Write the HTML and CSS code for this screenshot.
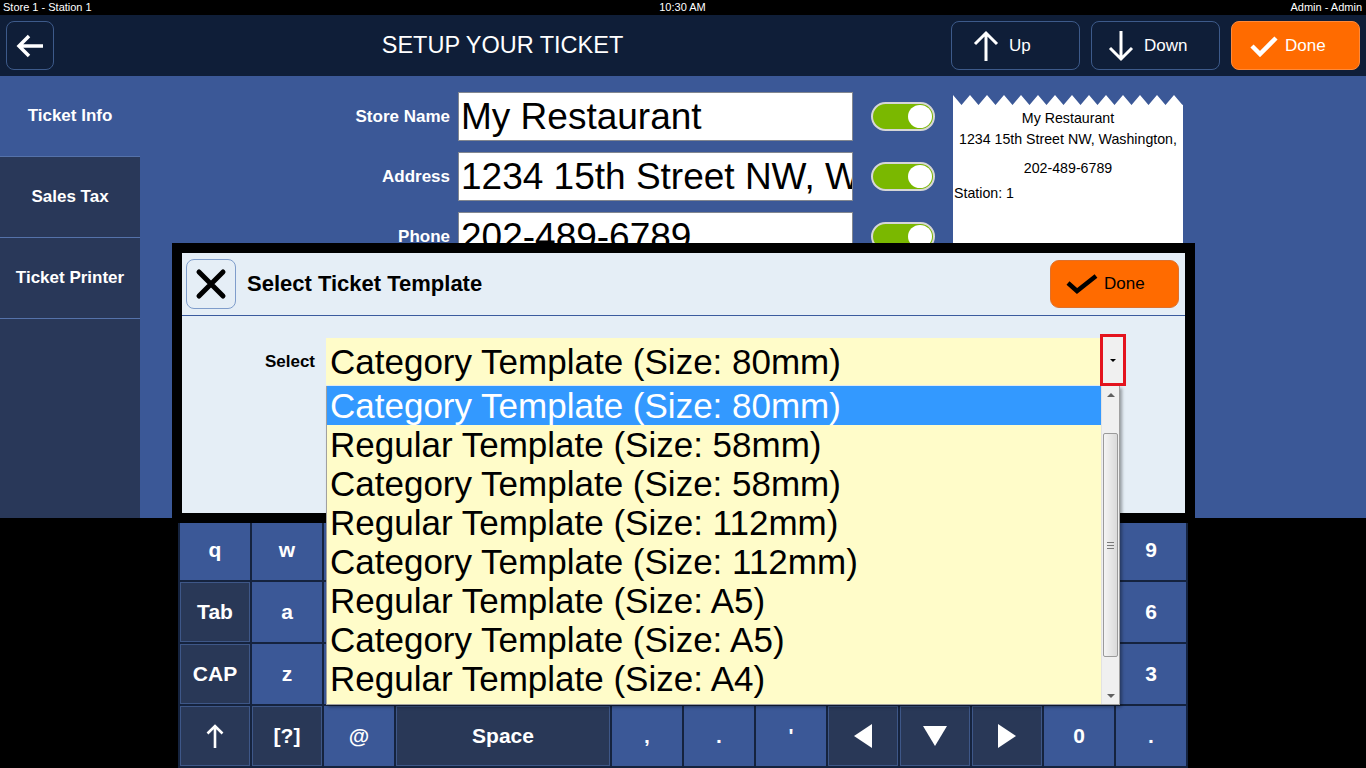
FILE: index.html
```html
<!DOCTYPE html>
<html>
<head>
<meta charset="utf-8">
<link rel="stylesheet" href="styles.css">
</head>
<body>
<div class="screen">
  <div class="statusbar">
    <span>Store 1 - Station 1</span>
    <span class="clock">10:30 AM</span>
    <span class="user">Admin - Admin</span>
  </div>

  <header class="header">
    <div class="back">
      <svg width="30" height="24" viewBox="0 0 30 24"><path d="M28 12H4M14 2L4 12l10 10" fill="none" stroke="#fff" stroke-width="3.5"/></svg>
    </div>
    <h1 class="title">SETUP YOUR TICKET</h1>
    <div class="actions">
      <div class="hbtn up">
        <svg width="26" height="32" viewBox="0 0 26 32"><path d="M13 31V3M2 14L13 3l11 11" fill="none" stroke="#fff" stroke-width="3"/></svg>
        <span>Up</span>
      </div>
      <div class="hbtn down">
        <svg width="26" height="32" viewBox="0 0 26 32"><path d="M13 1v28M2 18l11 11 11-11" fill="none" stroke="#fff" stroke-width="3"/></svg>
        <span>Down</span>
      </div>
      <div class="hbtn done">
        <svg width="28" height="22" viewBox="0 0 28 22"><path d="M2 11l8 8L26 3" fill="none" stroke="#fff" stroke-width="4.5"/></svg>
        <span>Done</span>
      </div>
    </div>
  </header>

  <div class="main">
    <nav class="sidebar">
      <div class="tab active">Ticket Info</div>
      <div class="tab">Sales Tax</div>
      <div class="tab">Ticket Printer</div>
    </nav>
    <section class="content">
      <div class="form">
        <div class="row">
          <div class="label">Store Name</div>
          <div class="input">My Restaurant</div>
          <div class="toggle"></div>
        </div>
        <div class="row">
          <div class="label">Address</div>
          <div class="input">1234 15th Street NW, W</div>
          <div class="toggle"></div>
        </div>
        <div class="row">
          <div class="label">Phone</div>
          <div class="input">202-489-6789</div>
          <div class="toggle"></div>
        </div>
      </div>
      <div class="receipt">
        <svg class="zig" width="230" height="10" viewBox="0 0 230 10"><defs><pattern id="zz" width="17" height="10" patternUnits="userSpaceOnUse"><path d="M0 0L8.5 10L17 0V10H0Z" fill="#fff"/></pattern></defs><rect width="230" height="10" fill="url(#zz)"/></svg>
        <div class="rbody">
          <div class="rl r1">My Restaurant</div>
          <div class="rl r2">1234 15th Street NW, Washington,</div>
          <div class="rl r3">202-489-6789</div>
          <div class="rl r4">Station: 1</div>
        </div>
      </div>
    </section>
  </div>

  <div class="keyboard">
    <div class="key">q</div><div class="key">w</div><div class="key"></div><div class="key"></div><div class="key"></div><div class="key"></div><div class="key"></div><div class="key"></div><div class="key"></div><div class="key"></div><div class="key dark"></div><div class="key"></div><div class="key"></div><div class="key">9</div>
    <div class="key dark">Tab</div><div class="key">a</div><div class="key"></div><div class="key"></div><div class="key"></div><div class="key"></div><div class="key"></div><div class="key"></div><div class="key"></div><div class="key"></div><div class="key dark"></div><div class="key"></div><div class="key"></div><div class="key">6</div>
    <div class="key dark">CAP</div><div class="key">z</div><div class="key"></div><div class="key"></div><div class="key"></div><div class="key"></div><div class="key"></div><div class="key"></div><div class="key"></div><div class="key"></div><div class="key"></div><div class="key"></div><div class="key"></div><div class="key">3</div>
    <div class="key dark"><svg width="18" height="26" viewBox="0 0 18 26"><path d="M9 25V3M1.5 10.5L9 3l7.5 7.5" fill="none" stroke="#fff" stroke-width="2.6"/></svg></div>
    <div class="key dark">[?]</div>
    <div class="key">@</div>
    <div class="key dark space">Space</div>
    <div class="key">,</div>
    <div class="key">.</div>
    <div class="key">'</div>
    <div class="key dark"><svg width="18" height="24" viewBox="0 0 18 24"><polygon points="18,0 0,12 18,24" fill="#fff"/></svg></div>
    <div class="key dark"><svg width="24" height="20" viewBox="0 0 24 20"><polygon points="0,0 24,0 12,20" fill="#fff"/></svg></div>
    <div class="key dark"><svg width="18" height="24" viewBox="0 0 18 24"><polygon points="0,0 18,12 0,24" fill="#fff"/></svg></div>
    <div class="key">0</div>
    <div class="key">.</div>
  </div>

  <div class="dialog">
    <div class="dhead">
      <div class="close">
        <svg width="32" height="32" viewBox="0 0 32 32"><path d="M4 4L28 28M28 4L4 28" fill="none" stroke="#000" stroke-width="5" stroke-linecap="round"/></svg>
      </div>
      <div class="dtitle">Select Ticket Template</div>
      <div class="ddone">
        <svg width="32" height="22" viewBox="0 0 32 22"><path d="M2 10l9 8L30 3" fill="none" stroke="#000" stroke-width="4.5"/></svg>
        <span>Done</span>
      </div>
    </div>
    <div class="dbody">
      <div class="slabel">Select</div>
      <div class="select">Category Template (Size: 80mm)</div>
      <div class="dropbtn"><span class="tri"></span></div>
    </div>
  </div>

  <div class="dropdown">
    <div class="opts">
      <div class="opt sel">Category Template (Size: 80mm)</div>
      <div class="opt">Regular Template (Size: 58mm)</div>
      <div class="opt">Category Template (Size: 58mm)</div>
      <div class="opt">Regular Template (Size: 112mm)</div>
      <div class="opt">Category Template (Size: 112mm)</div>
      <div class="opt">Regular Template (Size: A5)</div>
      <div class="opt">Category Template (Size: A5)</div>
      <div class="opt">Regular Template (Size: A4)</div>
    </div>
    <div class="scroll">
      <div class="sarrow"><span class="stri up"></span></div>
      <div class="thumb"><span class="grip"></span></div>
      <div class="sarrow bottom"><span class="stri dn"></span></div>
    </div>
  </div>
</div>
</body>
</html>
```

FILE: styles.css
```css
* { box-sizing: border-box; margin: 0; padding: 0; }

body {
  background: #000;
  font-family: "Liberation Sans", Arial, sans-serif;
  width: 1366px;
  height: 768px;
  overflow: hidden;
}

.screen {
  position: relative;
  width: 1366px;
  height: 768px;
}

/* status bar */
.statusbar {
  height: 15px;
  display: grid;
  grid-template-columns: 1fr auto 1fr;
  padding: 0 4px 0 3px;
  color: #fff;
  font-family: "Liberation Sans Narrow", "Liberation Sans", sans-serif;
  font-size: 11px;
  line-height: 15px;
}
.statusbar .user { text-align: right; }

/* header */
.header {
  height: 61px;
  background: #0f1e38;
  display: flex;
  align-items: center;
  padding: 0 6px;
}
.back {
  width: 48px;
  height: 49px;
  border: 1px solid #3d5a8a;
  border-radius: 8px;
  display: flex;
  align-items: center;
  justify-content: center;
}
.title {
  flex: 1;
  text-align: center;
  color: #fff;
  font-size: 23.5px;
  font-weight: normal;
}
.actions { display: flex; gap: 11px; }
.hbtn {
  width: 129px;
  height: 49px;
  border: 1px solid #3d5a8a;
  border-radius: 8px;
  display: flex;
  align-items: center;
  gap: 10px;
  color: #fff;
  font-size: 17px;
}
.hbtn.up { padding-left: 21px; }
.hbtn.down { padding-left: 16px; }
.hbtn.done {
  background: #ff6b00;
  border-color: #ff8a3a;
  padding-left: 18px;
  gap: 7px;
}

/* main */
.main {
  height: 442px;
  display: flex;
}
.sidebar {
  width: 140px;
  background: #293859;
  display: flex;
  flex-direction: column;
}
.tab {
  height: 81px;
  border-bottom: 1px solid #5572aa;
  display: flex;
  align-items: center;
  justify-content: center;
  color: #fff;
  font-weight: bold;
  font-size: 17px;
}
.tab.active { background: #3b5897; }

.content {
  flex: 1;
  background: #3b5897;
  display: flex;
  align-items: flex-start;
  gap: 18px;
  padding: 16px 0 0 190px;
}
.form {
  display: flex;
  flex-direction: column;
  gap: 11px;
}
.row {
  display: flex;
  align-items: center;
}
.label {
  width: 120px;
  margin-right: 8px;
  text-align: right;
  color: #fff;
  font-weight: bold;
  font-size: 17px;
}
.input {
  width: 395px;
  height: 49px;
  background: #fff;
  border: 1px solid #828790;
  color: #000;
  font-size: 37px;
  line-height: 47px;
  padding-left: 2px;
  white-space: nowrap;
  overflow: hidden;
}
.toggle {
  position: relative;
  margin-left: 18px;
  width: 64px;
  height: 29px;
  border-radius: 15px;
  background: #7ab800;
  border: 2px solid #d6d6d6;
}
.toggle::after {
  content: "";
  position: absolute;
  right: 1px;
  top: 1px;
  width: 24px;
  height: 23px;
  border-radius: 50%;
  background: #fff;
}

.receipt {
  width: 230px;
  margin-top: 3px;
}
.zig { display: block; }
.rbody {
  background: #fff;
  height: 300px;
  color: #000;
  font-size: 14.2px;
  line-height: 20px;
  padding-top: 3px;
}
.rl { text-align: center; white-space: nowrap; }
.r2 { margin-top: 1px; }
.r3 { margin-top: 9px; }
.r4 { margin-top: 5px; text-align: left; padding-left: 1px; }

/* keyboard */
.keyboard {
  margin-left: 178px;
  width: 1010px;
  height: 250px;
  background: #15233e;
  padding: 2px;
  display: grid;
  grid-template-columns: repeat(14, 70px);
  grid-template-rows: repeat(4, 60px);
  gap: 2px;
}
.key {
  background: #3b5897;
  color: #fff;
  font-weight: bold;
  font-size: 21px;
  display: flex;
  align-items: center;
  justify-content: center;
}
.key.dark {
  background: #293857;
  box-shadow: inset 0 0 0 1px #3e5788;
}
.key.space { grid-column: span 3; }

/* dialog */
.dialog {
  position: absolute;
  left: 172px;
  top: 243px;
  width: 1023px;
  height: 280px;
  border: 10px solid #000;
  background: #e5eef6;
}
.dhead {
  height: 63px;
  border-bottom: 1px solid #3b5b9e;
  display: flex;
  align-items: center;
  padding: 0 6px 0 4px;
}
.close {
  width: 50px;
  height: 50px;
  border: 1px solid #7f9dcb;
  border-radius: 8px;
  display: flex;
  align-items: center;
  justify-content: center;
}
.dtitle {
  margin-left: 11px;
  font-weight: bold;
  font-size: 22px;
  color: #000;
}
.ddone {
  margin-left: auto;
  width: 129px;
  height: 48px;
  background: #ff6b00;
  border: 1px solid #e0702a;
  border-radius: 9px;
  display: flex;
  align-items: center;
  gap: 6px;
  padding-left: 15px;
  color: #000;
  font-size: 17px;
}
.dbody {
  display: flex;
  align-items: flex-start;
  padding-top: 22px;
}
.slabel {
  width: 133px;
  text-align: right;
  font-weight: bold;
  font-size: 17px;
  line-height: 47px;
  color: #000;
}
.select {
  margin-left: 11px;
  width: 774px;
  height: 47px;
  background: #fffcc9;
  color: #000;
  font-size: 35px;
  line-height: 47px;
  padding-left: 4px;
  white-space: nowrap;
  overflow: hidden;
}
.dropbtn {
  width: 26px;
  height: 52px;
  margin-top: -4px;
  border: 3px solid #e4141e;
  background: #f0f0f0;
  display: flex;
  align-items: center;
  justify-content: center;
}
.tri {
  width: 0;
  height: 0;
  border-left: 3px solid transparent;
  border-right: 3px solid transparent;
  border-top: 3px solid #000;
}

/* dropdown list */
.dropdown {
  position: absolute;
  left: 326px;
  top: 386px;
  width: 794px;
  height: 319px;
  background: #fffcc9;
  border: 1px solid #a0a0a0;
  border-top: none;
  box-shadow: 2px 2px 3px rgba(0, 0, 0, 0.35);
  display: flex;
}
.opts { flex: 1; overflow: hidden; }
.opt {
  height: 39px;
  line-height: 39px;
  font-size: 35px;
  padding-left: 3px;
  color: #000;
  white-space: nowrap;
}
.opt.sel { background: #3399ff; color: #fff; }

.scroll {
  width: 18px;
  background: #f0f0f0;
  border-left: 1px solid #e2e2e2;
  display: flex;
  flex-direction: column;
  align-items: center;
}
.sarrow {
  height: 17px;
  width: 100%;
  display: flex;
  align-items: center;
  justify-content: center;
}
.sarrow.bottom { margin-top: auto; }
.stri {
  width: 0;
  height: 0;
  border-left: 4px solid transparent;
  border-right: 4px solid transparent;
}
.stri.up { border-bottom: 4px solid #606060; }
.stri.dn { border-top: 4px solid #606060; }
.thumb {
  width: 15px;
  height: 224px;
  margin-top: 30px;
  border: 1px solid #9a9a9a;
  border-radius: 2px;
  background: linear-gradient(to right, #f4f4f4, #dadada);
  display: flex;
  align-items: center;
  justify-content: center;
}
.grip {
  width: 7px;
  height: 7px;
  background: repeating-linear-gradient(to bottom, #7a7a7a 0 1px, transparent 1px 3px);
}
```
